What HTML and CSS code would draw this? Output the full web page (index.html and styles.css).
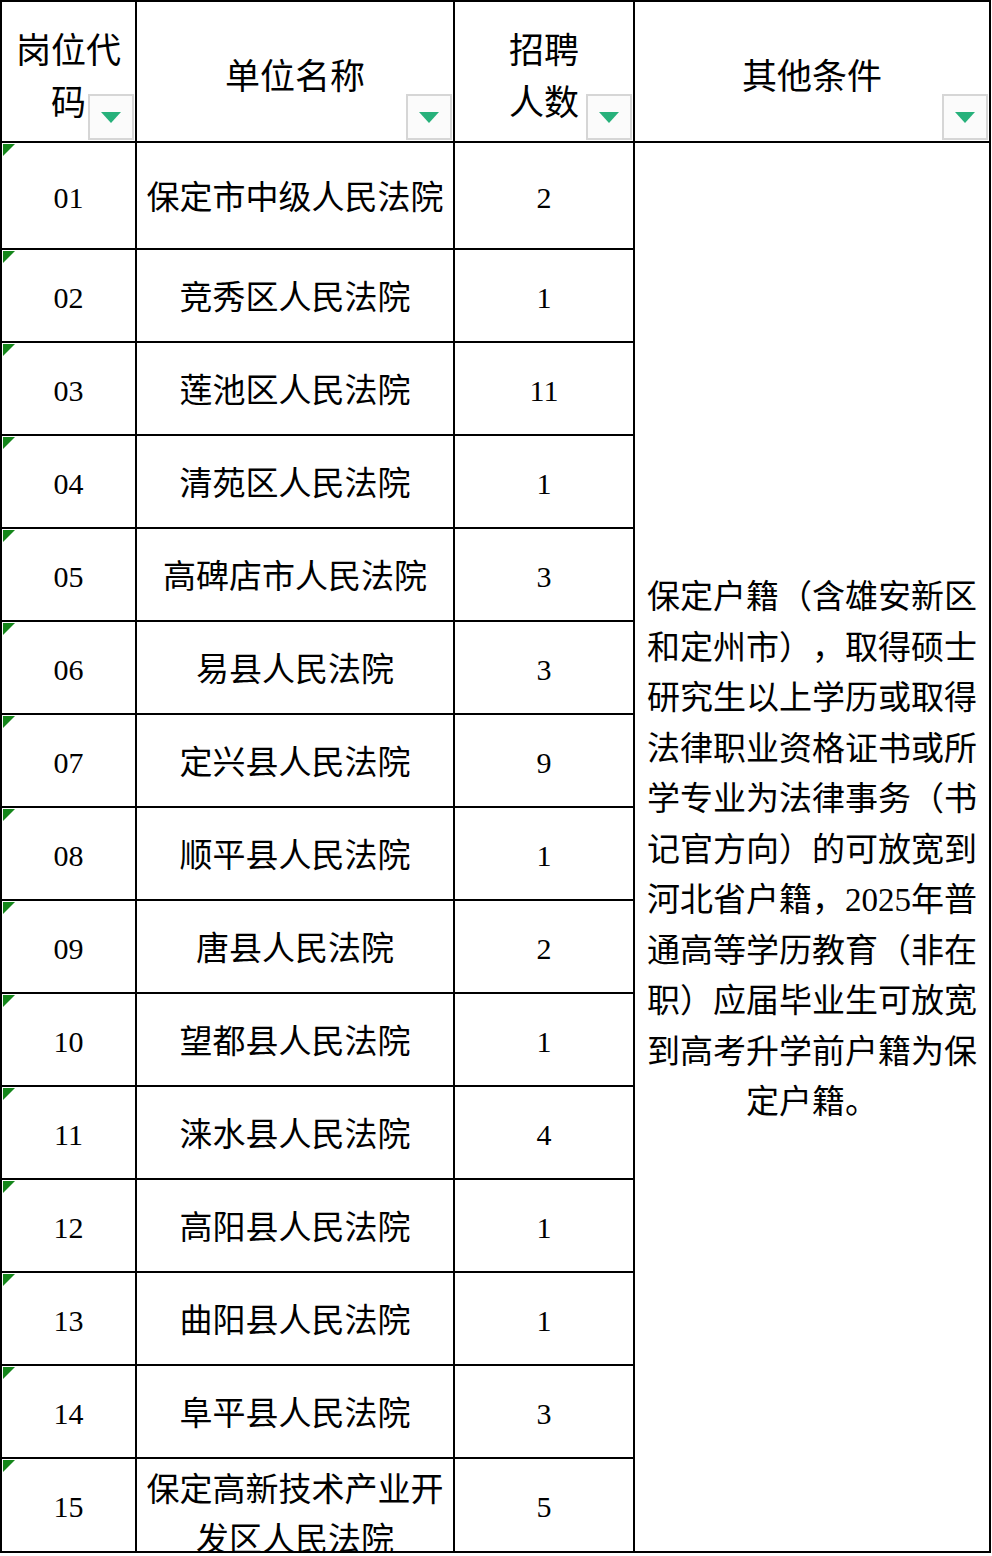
FILE: index.html
```html
<!DOCTYPE html>
<html lang="zh-CN">
<head>
<meta charset="utf-8">
<title>岗位表</title>
<link rel="stylesheet" href="styles.css">
</head>
<body>
<div class="sheet">
  <div class="cell head">岗位代<br>码<span class="filter"><i></i></span></div>
  <div class="cell head">单位名称<span class="filter"><i></i></span></div>
  <div class="cell head">招聘<br>人数<span class="filter"><i></i></span></div>
  <div class="cell head">其他条件<span class="filter"><i></i></span></div>

  <div class="cell num"><b class="flag"></b>01</div>
  <div class="cell name">保定市中级人民法院</div>
  <div class="cell num">2</div>
  <div class="cell cond">保定户籍（含雄安新区<br>和定州市），取得硕士<br>研究生以上学历或取得<br>法律职业资格证书或所<br>学专业为法律事务（书<br>记官方向）的可放宽到<br>河北省户籍，2025年普<br>通高等学历教育（非在<br>职）应届毕业生可放宽<br>到高考升学前户籍为保<br>定户籍。</div>

  <div class="cell num"><b class="flag"></b>02</div>
  <div class="cell name">竞秀区人民法院</div>
  <div class="cell num">1</div>

  <div class="cell num"><b class="flag"></b>03</div>
  <div class="cell name">莲池区人民法院</div>
  <div class="cell num">11</div>

  <div class="cell num"><b class="flag"></b>04</div>
  <div class="cell name">清苑区人民法院</div>
  <div class="cell num">1</div>

  <div class="cell num"><b class="flag"></b>05</div>
  <div class="cell name">高碑店市人民法院</div>
  <div class="cell num">3</div>

  <div class="cell num"><b class="flag"></b>06</div>
  <div class="cell name">易县人民法院</div>
  <div class="cell num">3</div>

  <div class="cell num"><b class="flag"></b>07</div>
  <div class="cell name">定兴县人民法院</div>
  <div class="cell num">9</div>

  <div class="cell num"><b class="flag"></b>08</div>
  <div class="cell name">顺平县人民法院</div>
  <div class="cell num">1</div>

  <div class="cell num"><b class="flag"></b>09</div>
  <div class="cell name">唐县人民法院</div>
  <div class="cell num">2</div>

  <div class="cell num"><b class="flag"></b>10</div>
  <div class="cell name">望都县人民法院</div>
  <div class="cell num">1</div>

  <div class="cell num"><b class="flag"></b>11</div>
  <div class="cell name">涞水县人民法院</div>
  <div class="cell num">4</div>

  <div class="cell num"><b class="flag"></b>12</div>
  <div class="cell name">高阳县人民法院</div>
  <div class="cell num">1</div>

  <div class="cell num"><b class="flag"></b>13</div>
  <div class="cell name">曲阳县人民法院</div>
  <div class="cell num">1</div>

  <div class="cell num"><b class="flag"></b>14</div>
  <div class="cell name">阜平县人民法院</div>
  <div class="cell num">3</div>

  <div class="cell num"><b class="flag"></b>15</div>
  <div class="cell name name-wrap">保定高新技术产业开发区人民法院</div>
  <div class="cell num">5</div>
</div>
</body>
</html>
```

FILE: styles.css
```css
html, body {
  margin: 0;
  padding: 0;
  background: #fff;
}

body {
  font-family: "Liberation Serif", "Noto Sans CJK SC", serif;
  color: #000;
  text-spacing-trim: space-all;
}

.sheet {
  display: grid;
  grid-template-columns: 135px 318px 180px 356px;
  grid-template-rows: 141px 107px repeat(13, 93px) 94px;
  border-left: 2px solid #000;
  border-top: 2px solid #000;
  width: max-content;
}

.cell {
  position: relative;
  box-sizing: border-box;
  border-right: 2px solid #000;
  border-bottom: 2px solid #000;
  display: flex;
  align-items: center;
  justify-content: center;
  text-align: center;
  overflow: hidden;
}

.head {
  font-size: 35px;
  line-height: 52px;
  padding-top: 12px;
}

.num {
  font-size: 30px;
  line-height: 40px;
  padding-top: 4px;
}

.name {
  font-size: 33px;
  line-height: 50px;
  padding-top: 4px;
}

.name-wrap {
  align-items: flex-start;
  padding-top: 6px;
}

.cond {
  grid-column: 4;
  grid-row: 2 / span 15;
  font-size: 33px;
  line-height: 50.5px;
  white-space: nowrap;
  padding: 6px 4px 0 4px;
}

.filter {
  position: absolute;
  right: 1px;
  bottom: 1px;
  width: 46px;
  height: 46px;
  box-sizing: border-box;
  border: 2px solid #d6d6d6;
  background: #fbfbfb;
  display: flex;
  align-items: center;
  justify-content: center;
}

.filter i {
  display: block;
  width: 0;
  height: 0;
  border-left: 10px solid transparent;
  border-right: 10px solid transparent;
  border-top: 11px solid #27b17b;
  margin-top: 1px;
}

.flag {
  position: absolute;
  top: 1px;
  left: 1px;
  width: 0;
  height: 0;
  border-top: 12px solid #14861a;
  border-right: 12px solid transparent;
}
```
